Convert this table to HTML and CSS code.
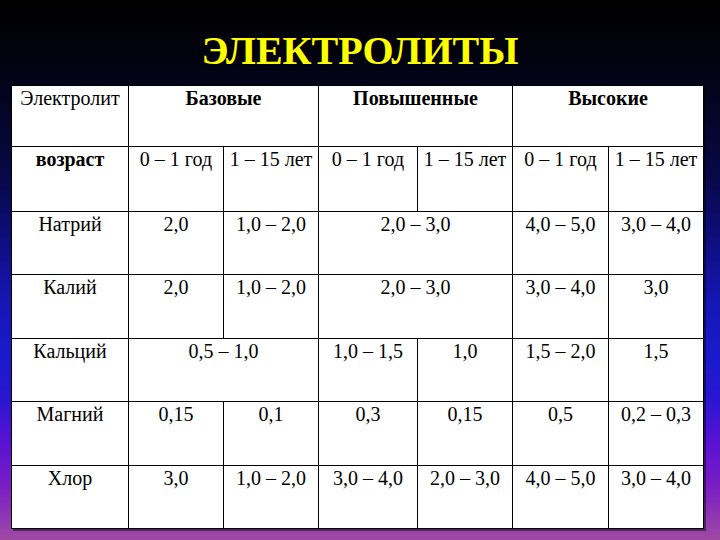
FILE: index.html
```html
<!DOCTYPE html>
<html lang="ru">
<head>
<meta charset="utf-8">
<title>Электролиты</title>
<link rel="stylesheet" href="styles.css">
</head>
<body>
<div class="slide">
  <h1 class="title">ЭЛЕКТРОЛИТЫ</h1>
  <table class="grid">
    <colgroup>
      <col class="c-name">
      <col class="c-95">
      <col class="c-95">
      <col class="c-99">
      <col class="c-95">
      <col class="c-96">
      <col class="c-95">
    </colgroup>
    <tr class="r61">
      <td>Электролит</td>
      <td colspan="2" class="b">Базовые</td>
      <td colspan="2" class="b">Повышенные</td>
      <td colspan="2" class="b">Высокие</td>
    </tr>
    <tr class="r65">
      <td class="b">возраст</td>
      <td>0 – 1 год</td>
      <td>1 – 15 лет</td>
      <td>0 – 1 год</td>
      <td>1 – 15 лет</td>
      <td>0 – 1 год</td>
      <td>1 – 15 лет</td>
    </tr>
    <tr class="r63">
      <td>Натрий</td>
      <td>2,0</td>
      <td>1,0 – 2,0</td>
      <td colspan="2">2,0 – 3,0</td>
      <td>4,0 – 5,0</td>
      <td>3,0 – 4,0</td>
    </tr>
    <tr class="r64">
      <td>Калий</td>
      <td>2,0</td>
      <td>1,0 – 2,0</td>
      <td colspan="2">2,0 – 3,0</td>
      <td>3,0 – 4,0</td>
      <td>3,0</td>
    </tr>
    <tr class="r63">
      <td>Кальций</td>
      <td colspan="2">0,5 – 1,0</td>
      <td>1,0 – 1,5</td>
      <td>1,0</td>
      <td>1,5 – 2,0</td>
      <td>1,5</td>
    </tr>
    <tr class="r64">
      <td>Магний</td>
      <td>0,15</td>
      <td>0,1</td>
      <td>0,3</td>
      <td>0,15</td>
      <td>0,5</td>
      <td>0,2 – 0,3</td>
    </tr>
    <tr class="r63">
      <td>Хлор</td>
      <td>3,0</td>
      <td>1,0 – 2,0</td>
      <td>3,0 – 4,0</td>
      <td>2,0 – 3,0</td>
      <td>4,0 – 5,0</td>
      <td>3,0 – 4,0</td>
    </tr>
  </table>
</div>
</body>
</html>
```
FILE: styles.css
```css
html, body {
  margin: 0;
  padding: 0;
}
body {
  width: 720px;
  height: 540px;
  overflow: hidden;
  font-family: "Liberation Serif", "Times New Roman", serif;
  background: linear-gradient(180deg,
    #000000 0%,
    #02020e 10%,
    #05052a 22%,
    #08084a 33%,
    #0e0e80 45%,
    #1616b4 56%,
    #1a1acc 66%,
    #2a16d0 74%,
    #5a12d2 82%,
    #7a1ec4 90%,
    #9038b0 96%,
    #a04aa4 100%);
}
.slide {
  display: flex;
  flex-direction: column;
  align-items: flex-start;
}
.title {
  box-sizing: border-box;
  width: 720px;
  height: 85px;
  margin: 0;
  padding-top: 31px;
  text-align: center;
  font-family: "Liberation Serif", "Times New Roman", serif;
  font-size: 40px;
  line-height: 40px;
  font-weight: bold;
  color: #ffff00;
  text-shadow: 1px 1px 1px rgba(0, 0, 0, 0.6);
}
.grid {
  margin-left: 11px;
  border-collapse: collapse;
  table-layout: fixed;
  width: 692px;
  background: #ffffff;
  box-shadow: 2px 2px 0 rgba(0, 0, 0, 0.45);
  font-family: "Liberation Serif", "Times New Roman", serif;
  font-size: 20px;
  color: #000000;
}
.grid td {
  border: 1px solid #000000;
  padding: 1px 1px 0 1px;
  text-align: center;
  vertical-align: top;
  white-space: nowrap;
  line-height: 23px;
}
.c-name { width: 117px; }
.c-95 { width: 95px; }
.c-96 { width: 96px; }
.c-99 { width: 99px; }
.r61 { height: 61px; }
.r63 { height: 63px; }
.r64 { height: 64px; }
.r65 { height: 65px; }
.b { font-weight: bold; }
```
